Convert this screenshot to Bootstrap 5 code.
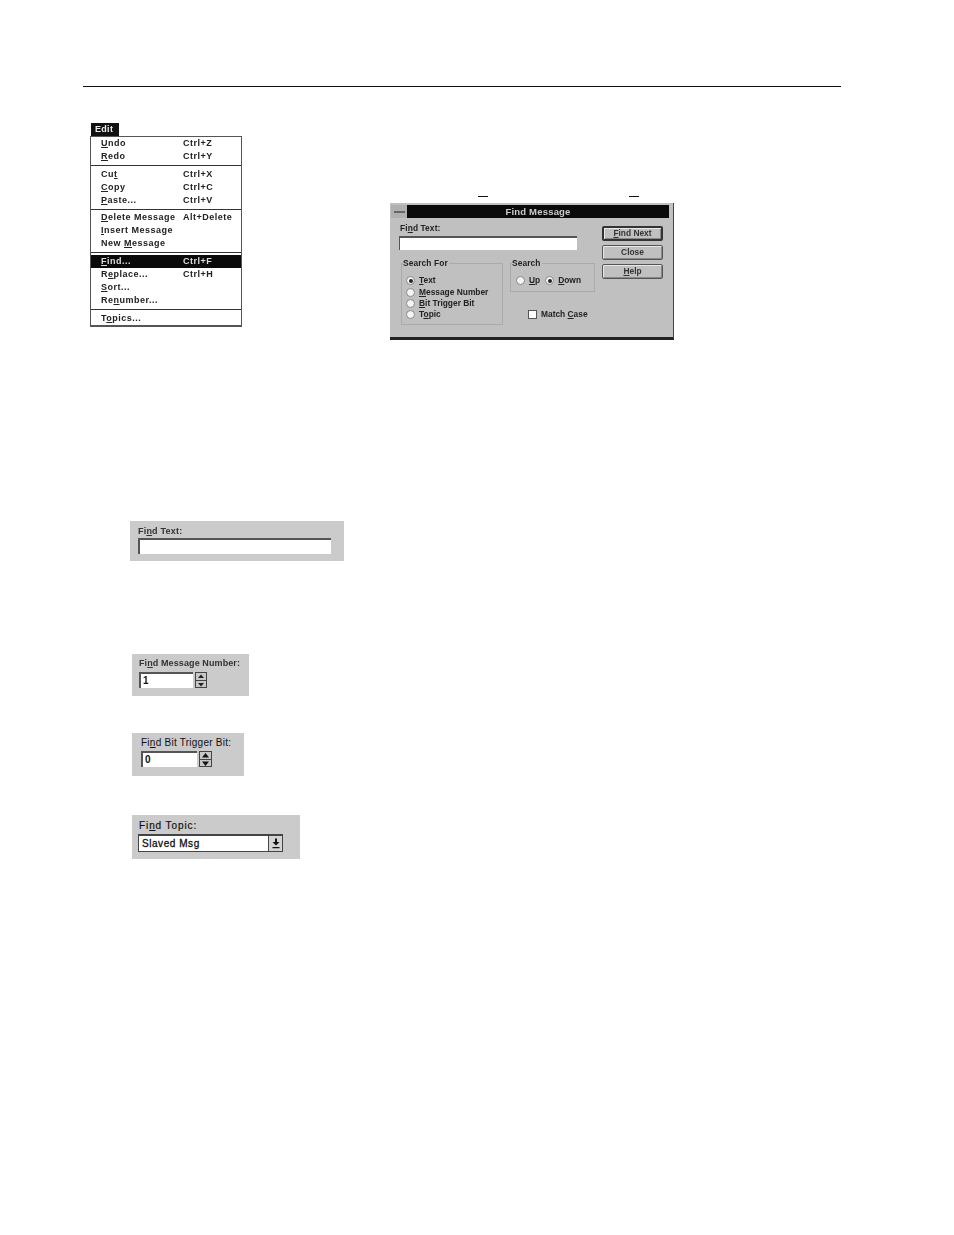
<!DOCTYPE html>
<html lang="en">
<head>
<meta charset="utf-8">
<title>Find Message</title>
<link rel="stylesheet" href="https://cdn.jsdelivr.net/npm/bootstrap@5.3.0/dist/css/bootstrap.min.css">
<style>
html,body{background:#fff;margin:0;}
body{font-family:"Liberation Sans",Arial,sans-serif;font-size:8.4px;font-weight:700;color:#222;line-height:1;}
.pg{width:954px;height:1235px;padding-top:86px;overflow:hidden;}
u{text-underline-offset:1px;}
.toprule{height:1px;width:758px;margin-left:83px;background:#111;}
.figs{margin-top:36px;}
/* menu */
.mnu{width:152px;margin-left:90px;filter:blur(.6px);font-size:9px;}
.mtab{width:28px;height:13px;margin-left:1px;background:#111;color:#eee;padding-left:4px;line-height:13px;letter-spacing:.3px;}
.mbox{border:1px solid #555;border-bottom-width:2px;background:#fff;}
.mrow{height:13px;padding-left:10px;line-height:13px;letter-spacing:.5px;color:#222;}
.mkey{width:82px;flex:none;}
.msep{height:1px;background:#333;margin:2px 0;}
.msep.tight{margin-bottom:1px;}
.mon{background:#0a0a0a;color:#ddd;}
/* dialog */
.dlg{width:284px;height:137px;margin-left:148px;margin-top:80px;background:#c0c0c0;border-bottom:3px solid #222;border-right:1px solid #444;position:relative;filter:blur(.6px);}
.dashm{position:absolute;top:-7px;width:10px;height:1px;background:#111;}
.dm1{left:88px;}
.dm2{left:239px;}
.ttl{height:13px;margin:2px 4px 0 1px;}
.sysb{width:16px;background:#b0b0b0;display:flex;align-items:center;justify-content:center;}
.sysb i{display:block;width:11px;height:2px;background:#666;}
.tbar{background:#0a0a0a;color:#ccc;font-size:9.5px;letter-spacing:.2px;line-height:13px;text-align:center;}
.dbody{padding-left:9px;}
.dlft{width:197px;}
.dlab{height:10px;margin-top:5px;line-height:10px;letter-spacing:.1px;padding-left:1px;}
.dinp{height:14px;margin-top:3px;width:178px;background:#fff;border-top:2px solid #555;border-left:1px solid #555;}
.grp{border:1px solid #aaa;position:relative;margin-top:13px;}
.gp1{width:102px;height:62px;margin-left:2px;padding-top:11px;padding-left:4px;}
.gp2{width:85px;height:29px;margin-left:7px;padding-top:11px;padding-left:5px;}
.glg{position:absolute;top:-6px;left:1px;background:#c0c0c0;line-height:10px;padding-right:1px;letter-spacing:.1px;}
.opt{height:11.4px;line-height:11px;gap:4px;}
.rad{width:9px;height:9px;border-radius:50%;background:#f4f4f4;border:1px solid #888;flex:none;display:flex;align-items:center;justify-content:center;}
.rad i{display:block;width:4px;height:4px;border-radius:50%;background:#222;}
.chk{width:9px;height:9px;background:#fff;border:1px solid #555;flex:none;}
.mcase{margin:17px 0 0 25px;gap:4px;line-height:11px;}
.optd{margin-left:5px;}
.dbtns{width:61px;margin-left:6px;margin-top:8px;gap:4px;}
.w3b.btn{width:61px;height:15px;padding:0;border:1px solid #555;border-radius:2px;background:#c0c0c0;color:#333;font:700 8.4px/13px "Liberation Sans",Arial,sans-serif;box-shadow:inset 1px 1px 0 #e8e8e8,inset -1px -1px 0 #888;}
.w3b.dft{border:2px solid #333;line-height:11px;}
/* small panels */
.pnl{background:#cbcbcb;}
.pa{width:214px;height:40px;margin:181px 0 0 130px;padding:5px 0 0 8px;filter:blur(.7px);}
.pb{width:117px;height:42px;margin:93px 0 0 132px;padding:4px 0 0 7px;filter:blur(.7px);}
.pc{width:112px;height:43px;margin:37px 0 0 132px;padding:5px 0 0 9px;}
.pd{width:168px;height:44px;margin:39px 0 0 132px;padding:6px 0 0 7px;}
.plab{height:10px;line-height:10px;font-size:9px;letter-spacing:.2px;}
.pc .plab{font-weight:400;color:#111;font-size:10px;letter-spacing:.25px;}
.pd .plab{font-weight:400;color:#111;font-size:10px;letter-spacing:.9px;-webkit-text-stroke:.2px #111;}
.pb .plab{color:#333;letter-spacing:.1px;}
.pa .plab{color:#333;}
.inp3{background:#fff;border-top:2px solid #555;border-left:2px solid #555;}
.pa .inp3{width:193px;height:16px;margin-top:2px;}
.pb .inp3{width:54px;height:16px;}
.pc .inp3{width:56px;height:16px;}
.ival{padding-left:2px;line-height:13px;font-size:10px;color:#111;}
.spin{width:12px;height:16px;margin-left:2px;background:#c8c8c8;border:1px solid #444;}
.pc .spin{width:13px;}
.spin svg{display:block;width:100%;height:7px;}
.spin hr{margin:0;border:0;height:1px;background:#444;opacity:1;}
.wrapb{margin-top:4px;}
.wrapc{margin-top:3px;}
.cmb{width:145px;height:18px;margin-top:3px;margin-left:-1px;background:#fff;border:1px solid #444;border-top-width:2px;}
.ctxt{font-size:10px;font-weight:400;letter-spacing:.55px;color:#111;line-height:15px;padding-left:3px;-webkit-text-stroke:.3px #111;}
.cbtn{width:14px;margin-left:auto;background:#d4d4d4;border-left:1px solid #444;}
.cbtn svg{display:block;width:12px;height:14px;margin:auto;}
</style>
</head>
<body>
<main class="pg">
  <div class="toprule"></div>
  <section class="figs d-flex align-items-start">
    <div class="mnu">
      <div class="mtab">Edit</div>
      <div class="mbox">
        <div class="mrow d-flex"><span class="mkey"><u>U</u>ndo</span><span>Ctrl+Z</span></div>
        <div class="mrow d-flex"><span class="mkey"><u>R</u>edo</span><span>Ctrl+Y</span></div>
        <div class="msep"></div>
        <div class="mrow d-flex"><span class="mkey">Cu<u>t</u></span><span>Ctrl+X</span></div>
        <div class="mrow d-flex"><span class="mkey"><u>C</u>opy</span><span>Ctrl+C</span></div>
        <div class="mrow d-flex"><span class="mkey"><u>P</u>aste...</span><span>Ctrl+V</span></div>
        <div class="msep tight"></div>
        <div class="mrow d-flex"><span class="mkey"><u>D</u>elete Message</span><span>Alt+Delete</span></div>
        <div class="mrow d-flex"><span class="mkey"><u>I</u>nsert Message</span></div>
        <div class="mrow d-flex"><span class="mkey">New <u>M</u>essage</span></div>
        <div class="msep"></div>
        <div class="mrow mon d-flex"><span class="mkey"><u>F</u>ind...</span><span>Ctrl+F</span></div>
        <div class="mrow d-flex"><span class="mkey">R<u>e</u>place...</span><span>Ctrl+H</span></div>
        <div class="mrow d-flex"><span class="mkey"><u>S</u>ort...</span></div>
        <div class="mrow d-flex"><span class="mkey">Re<u>n</u>umber...</span></div>
        <div class="msep"></div>
        <div class="mrow d-flex"><span class="mkey">T<u>o</u>pics...</span></div>
      </div>
    </div>
    <div class="dlg">
      <span class="dashm dm1"></span><span class="dashm dm2"></span>
      <div class="ttl d-flex">
        <div class="sysb"><i></i></div>
        <div class="tbar flex-grow-1">Find Message</div>
      </div>
      <div class="dbody d-flex">
        <div class="dlft">
          <div class="dlab">Fi<u>n</u>d Text:</div>
          <div class="dinp"></div>
          <div class="d-flex align-items-start">
            <div class="grp gp1">
              <span class="glg">Search For</span>
              <div class="opt d-flex align-items-center"><span class="rad"><i></i></span><span><u>T</u>ext</span></div>
              <div class="opt d-flex align-items-center"><span class="rad"></span><span><u>M</u>essage Number</span></div>
              <div class="opt d-flex align-items-center"><span class="rad"></span><span><u>B</u>it Trigger Bit</span></div>
              <div class="opt d-flex align-items-center"><span class="rad"></span><span>T<u>o</u>pic</span></div>
            </div>
            <div class="d-flex flex-column">
              <div class="grp gp2 d-flex align-items-start">
                <span class="glg">Search</span>
                <div class="opt d-flex align-items-center"><span class="rad"></span><span><u>U</u>p</span></div>
                <div class="opt optd d-flex align-items-center"><span class="rad"><i></i></span><span><u>D</u>own</span></div>
              </div>
              <div class="mcase d-flex align-items-center"><span class="chk"></span><span>Match <u>C</u>ase</span></div>
            </div>
          </div>
        </div>
        <div class="dbtns d-flex flex-column">
          <button type="button" class="btn w3b dft"><u>F</u>ind Next</button>
          <button type="button" class="btn w3b">Close</button>
          <button type="button" class="btn w3b"><u>H</u>elp</button>
        </div>
      </div>
    </div>
  </section>

  <section class="pnl pa">
    <div class="plab">Fi<u>n</u>d Text:</div>
    <div class="inp3"></div>
  </section>

  <section class="pnl pb">
    <div class="plab">Fi<u>n</u>d Message Number:</div>
    <div class="d-flex wrapb">
      <div class="inp3 ival">1</div>
      <div class="spin">
        <svg viewBox="0 0 10 7"><path d="M5 1.500 8 5H2z" fill="#222"/></svg><hr>
        <svg viewBox="0 0 10 7"><path d="M5 5.500 8 2H2z" fill="#222"/></svg>
      </div>
    </div>
  </section>

  <section class="pnl pc">
    <div class="plab">Fi<u>n</u>d Bit Trigger Bit:</div>
    <div class="d-flex wrapc">
      <div class="inp3 ival">0</div>
      <div class="spin">
        <svg viewBox="0 0 11 7"><path d="M5.500 1 9 5.500H2z" fill="#111"/></svg><hr>
        <svg viewBox="0 0 11 7"><path d="M5.500 6 9 1.500H2z" fill="#111"/></svg>
      </div>
    </div>
  </section>

  <section class="pnl pd">
    <div class="plab">Fi<u>n</u>d Topic:</div>
    <div class="cmb d-flex">
      <div class="ctxt">Slaved Msg</div>
      <div class="cbtn"><svg viewBox="0 0 12 14"><path d="M5 2.500h2V6h2.500L6 9.500 2.500 6H5zM2.500 11h7v1.200h-7z" fill="#111"/></svg></div>
    </div>
  </section>
</main>
<script src="https://cdn.jsdelivr.net/npm/bootstrap@5.3.0/dist/js/bootstrap.bundle.min.js"></script>
</body>
</html>
